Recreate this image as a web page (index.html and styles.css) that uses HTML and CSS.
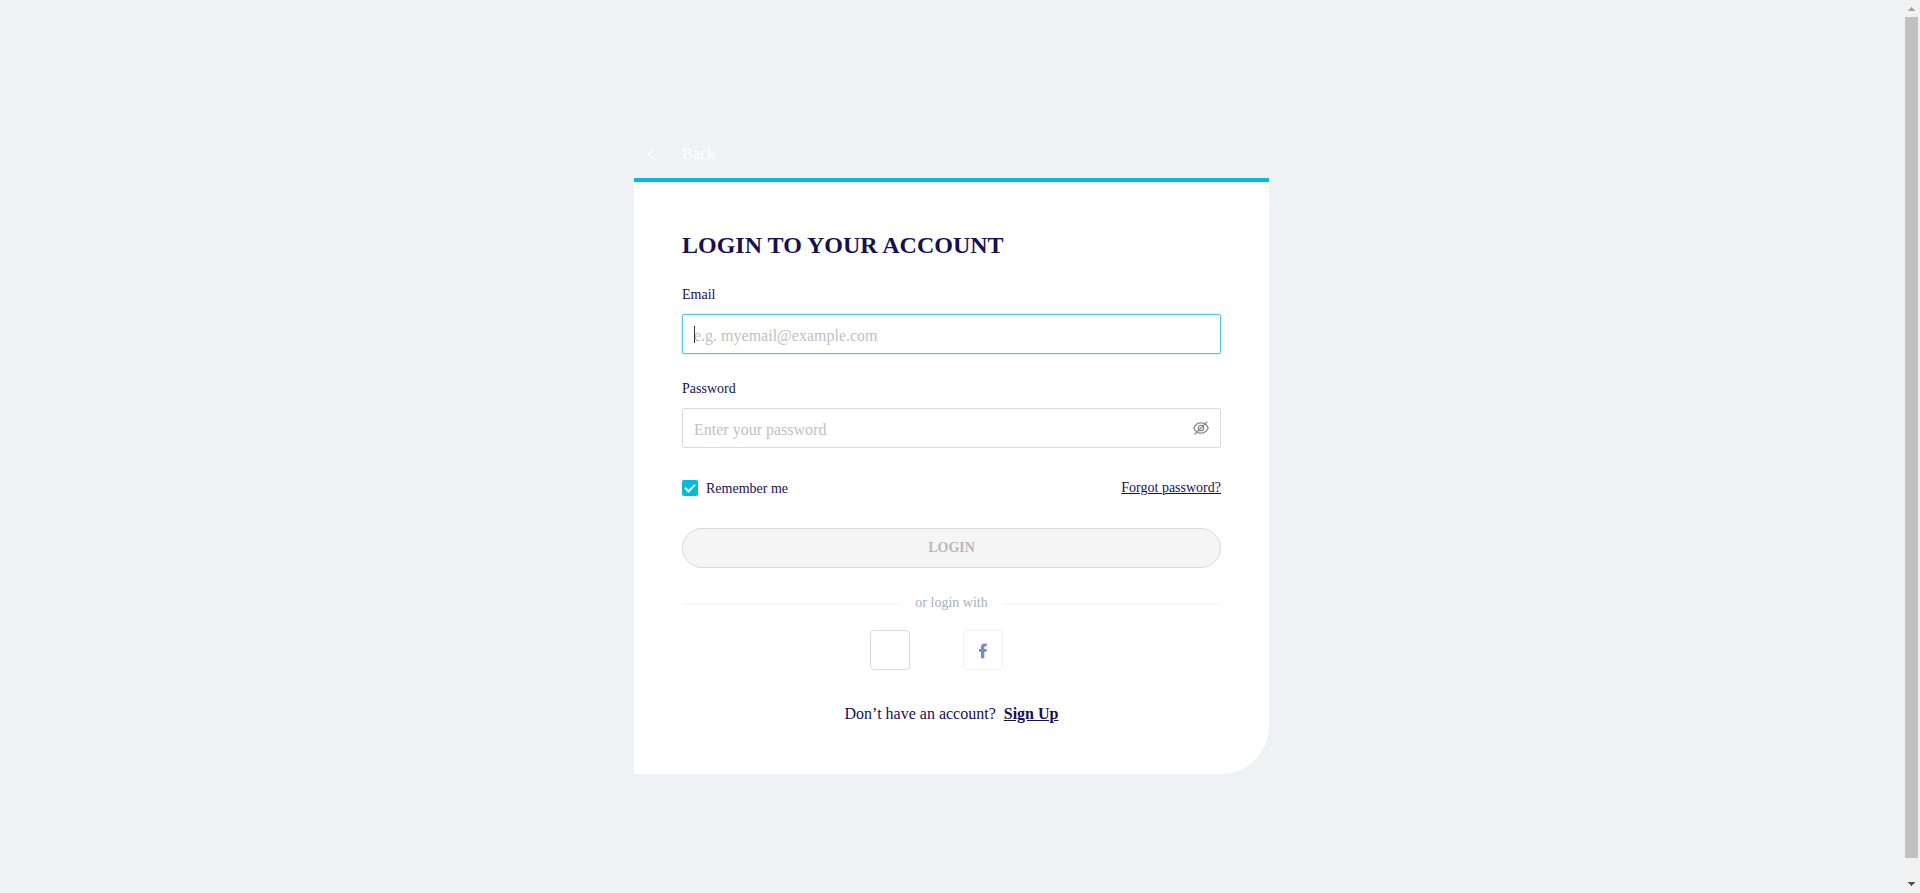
FILE: index.html
```html
<!DOCTYPE html>
<html lang="en">
<head>
<meta charset="utf-8">
<title>Login</title>
<link rel="stylesheet" href="styles.css">
</head>
<body>
<main class="page">
  <div class="login">
    <a class="back" href="#">
      <svg class="back-icon" viewBox="0 0 8 12" aria-hidden="true"><path d="M7.500.6.900 6l6.600 5.400"/></svg>
      <span>Back</span>
    </a>
    <form class="card">
      <h1 class="title">LOGIN TO YOUR ACCOUNT</h1>
      <div class="field">
        <label class="label" for="email">Email</label>
        <div class="control">
          <input class="input input-active" id="email" type="email" placeholder="e.g. myemail@example.com">
          <span class="caret"></span>
        </div>
      </div>
      <div class="field">
        <label class="label" for="password">Password</label>
        <div class="control">
          <input class="input" id="password" type="password" placeholder="Enter your password">
          <button class="reveal" type="button" aria-label="Show password">
            <svg viewBox="0 0 16 14" aria-hidden="true"><path d="M.8 7C2.300 3.500 4.700 1.900 8 1.900S13.700 3.500 15.200 7C13.700 10.500 11.300 12.100 8 12.100S2.300 10.500.8 7Z"/><circle cx="8" cy="7" r="2.700"/><path d="M1.600 13.500 14.200.6"/></svg>
          </button>
        </div>
      </div>
      <div class="options">
        <label class="remember"><input class="check" type="checkbox" checked>Remember me</label>
        <a class="link" href="#">Forgot password?</a>
      </div>
      <button class="submit" type="submit" disabled>LOGIN</button>
      <div class="divider">or login with</div>
      <div class="social">
        <button class="social-button" type="button" aria-label="Login with Google"></button>
        <button class="social-button social-facebook" type="button" aria-label="Login with Facebook">
          <svg viewBox="0 0 8 16" aria-hidden="true"><path d="M2 15.300V8.800H0V5.900h2V4.100C2 1.800 3.300.5 5.500.5c1 0 1.800.1 2.300.2v2.600H6.500c-1 0-1.200.5-1.200 1.200v1.400h2.500l-.4 2.900H5.300v6.500Z"/></svg>
        </button>
      </div>
      <p class="signup">Don’t have an account? <a class="link signup-link" href="#">Sign Up</a></p>
    </form>
  </div>
</main>
<div class="scrollbar" aria-hidden="true">
  <svg class="arrow arrow-up" viewBox="0 0 7 4"><path d="M3 0h1v1h1v1h1v1h1v1H0V3h1V2h1V1h1Z"/></svg>
  <span class="thumb"></span>
  <svg class="arrow arrow-down" viewBox="0 0 7 4"><path d="M0 0h7v1H6v1H5v1H4v1H3V3H2V2H1V1H0Z"/></svg>
</div>
</body>
</html>
```
FILE: styles.css
```css
*,
*::before,
*::after {
  box-sizing: border-box;
}

body {
  display: flex;
  min-height: 100vh;
  margin: 0;
  background: #f0f1f5;
  color: #180f50;
  font-family: "Liberation Serif", "Times New Roman", serif;
  font-size: 14px;
  line-height: 22px;
}

button,
input {
  font-family: inherit;
}

.page {
  display: flex;
  flex: 1;
  justify-content: center;
  align-items: flex-start;
  padding: 142px 0 48px;
}

.login {
  width: 100%;
  max-width: 635px;
}

.back {
  display: inline-flex;
  align-items: center;
  gap: 27px;
  margin-bottom: 12px;
  padding-left: 13px;
  color: #fff;
  font-size: 16px;
  line-height: 24px;
  text-decoration: none;
  vertical-align: top;
}

.back-icon {
  width: 8px;
  height: 12px;
  fill: none;
  stroke: #fff;
  stroke-width: 1.2;
}

.card {
  padding: 48px;
  border-top: 4px solid #00bbe0;
  border-bottom-right-radius: 48px;
  background: #fff;
}

.title {
  margin: 0 0 24px;
  font-size: 24px;
  line-height: 30px;
}

.field {
  margin-bottom: 24px;
}

.label {
  display: block;
  margin-bottom: 8px;
}

.control {
  position: relative;
}

.input {
  display: block;
  width: 100%;
  height: 40px;
  padding: 3px 11px 0;
  border: 1px solid #d9d9d9;
  border-radius: 2px;
  background: #fff;
  color: inherit;
  font-size: 16px;
  outline: none;
}

.input::placeholder {
  color: #bfbfbf;
  opacity: 1;
}

.input-active {
  border-color: #55c6de;
  box-shadow: 0 0 1px 1px #e0f6fb;
}

.caret {
  position: absolute;
  top: 12px;
  left: 12px;
  width: 1px;
  height: 17px;
  background: #333;
}

.reveal {
  position: absolute;
  top: 13px;
  right: 12px;
  width: 16px;
  height: 14px;
  padding: 0;
  border: 0;
  background: none;
}

.reveal svg {
  display: block;
  fill: none;
  stroke: #8c8c8c;
  stroke-width: 1.3;
}

.options {
  display: flex;
  justify-content: space-between;
  align-items: flex-start;
  margin: 32px 0 30px;
  line-height: 16px;
}

.remember {
  display: flex;
  gap: 8px;
  line-height: 18px;
}

.check {
  width: 16px;
  height: 16px;
  margin: 0;
  border-radius: 2px;
  appearance: none;
  background: #00bbe0;
}

.check:checked::before {
  content: "";
  display: block;
  width: 6px;
  height: 10px;
  margin: 2px 5px;
  border: solid #fff;
  border-width: 0 2px 2px 0;
  transform: rotate(45deg);
}

.link {
  color: inherit;
  text-decoration: underline;
}

.submit {
  display: block;
  width: 100%;
  height: 40px;
  margin-bottom: 24px;
  border: 1px solid #d9d9d9;
  border-radius: 20px;
  background: #f5f5f5;
  color: #b8b8b8;
  font-size: 14px;
  font-weight: bold;
}

.divider {
  display: flex;
  align-items: center;
  gap: 14px;
  margin-bottom: 16px;
  color: #a9aebd;
}

.divider::before,
.divider::after {
  content: "";
  flex: 1;
  height: 2px;
  margin-top: 2px;
  background: #f8f8f8;
}

.social {
  display: flex;
  justify-content: center;
  gap: 53px;
  margin-bottom: 32px;
  padding-right: 30px;
}

.social-button {
  display: flex;
  justify-content: center;
  align-items: center;
  width: 40px;
  height: 40px;
  padding: 0;
  border: 1px solid #dadada;
  border-radius: 4px;
  background: #fff;
}

.social-facebook {
  border-color: #efeff1;
}

.social-button svg {
  width: 8px;
  height: 16px;
  margin-top: 2px;
  fill: #728cc7;
}

.signup {
  display: flex;
  justify-content: center;
  gap: 8px;
  margin: 0;
  font-size: 16px;
  line-height: 24px;
}

.signup-link {
  font-weight: bold;
}

.scrollbar {
  position: sticky;
  top: 0;
  display: flex;
  flex-direction: column;
  align-items: center;
  gap: 6px;
  width: 17px;
  height: 100vh;
  padding: 7px 0;
  background: #f1f1f1;
}

.arrow {
  width: 7px;
  height: 4px;
  fill: #505050;
}

.arrow-up {
  fill: #a3a3a3;
}

.thumb {
  flex: 1;
  width: 13px;
  margin-bottom: 18px;
  background: #c1c1c1;
}
```
